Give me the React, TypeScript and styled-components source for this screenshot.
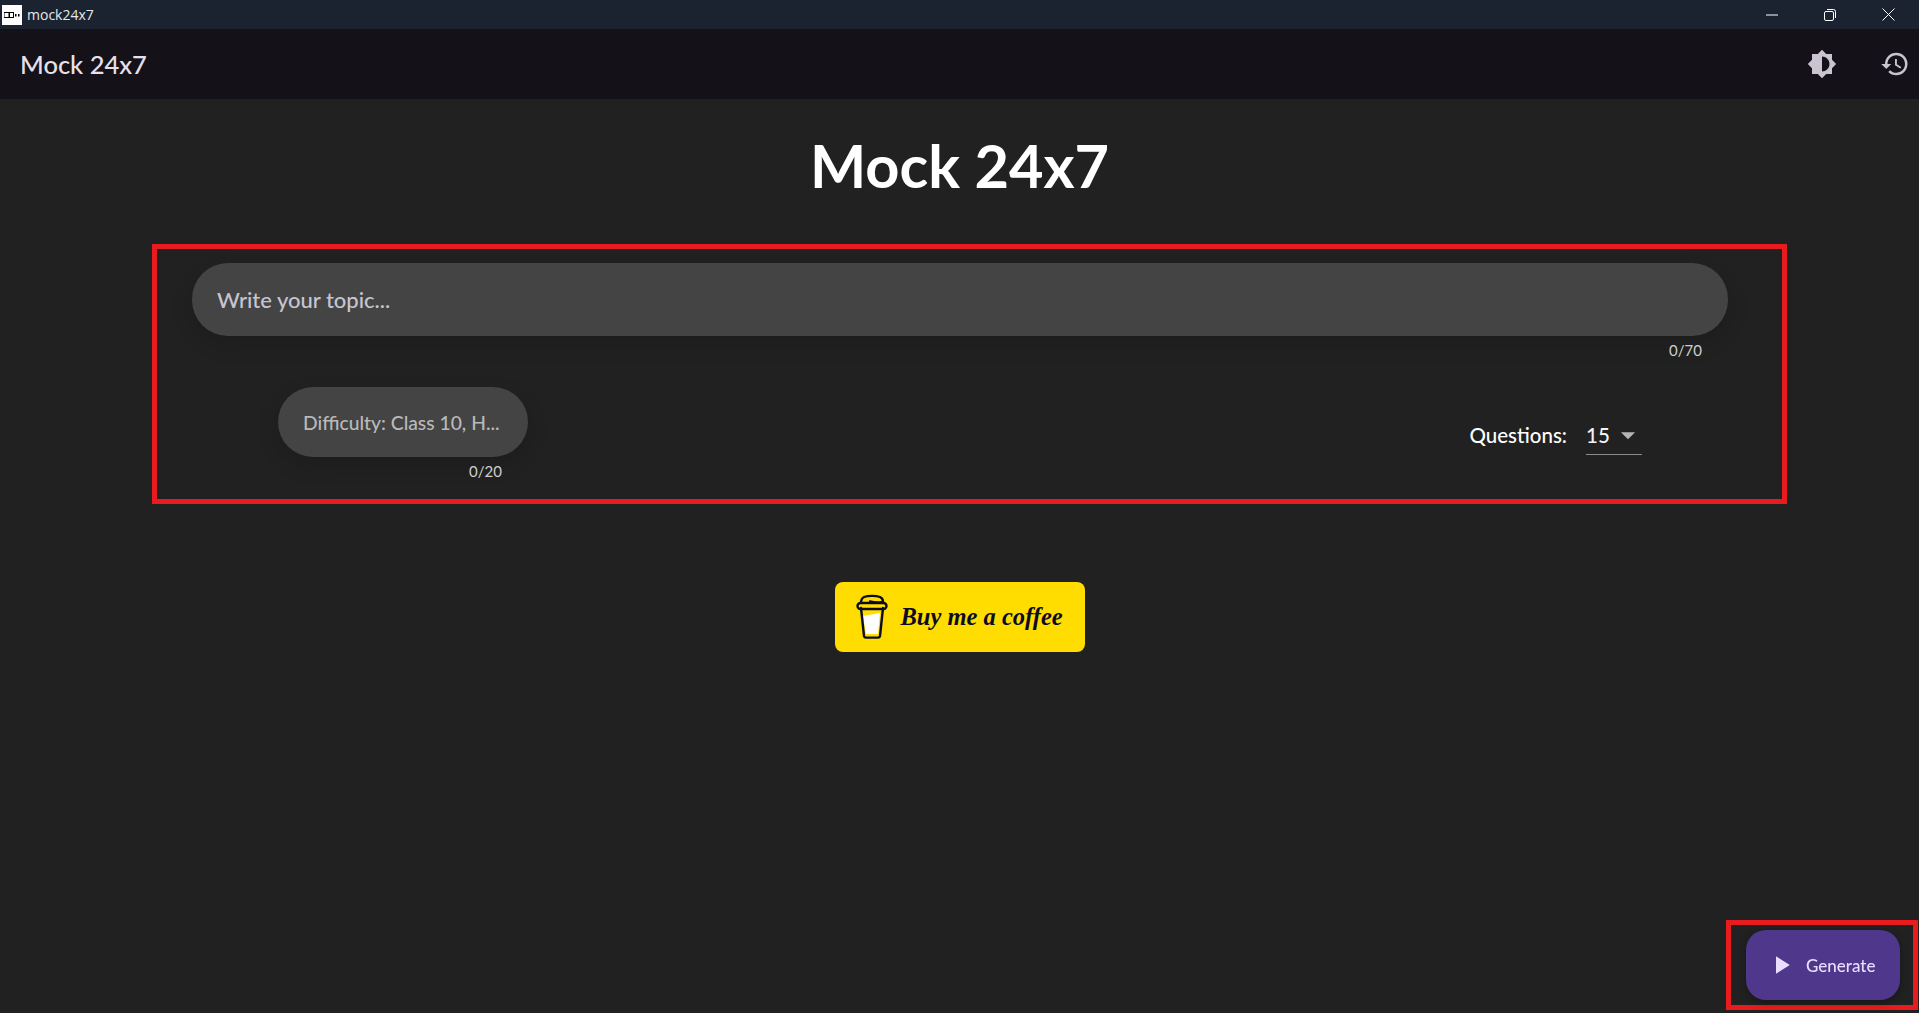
import React from 'react';
import styled, { createGlobalStyle } from 'styled-components';
import { MdHistory, MdPlayArrow, MdArrowDropDown } from 'react-icons/md';

const GlobalStyle = createGlobalStyle`
  html, body {
    margin: 0;
    height: 100%;
    background: #212121;
    overflow: hidden;
  }
  * {
    box-sizing: border-box;
  }
`;

const Page = styled.div`
  height: 1013px;
  display: flex;
  flex-direction: column;
  font-family: Lato, "Noto Sans", sans-serif;
  color: #fff;
`;

const TitleBar = styled.div`
  height: 29px;
  background: #1b2330;
  display: flex;
  align-items: center;
  padding: 0 2px;
`;

const WindowTitle = styled.span`
  margin-left: 5px;
  font-family: "Open Sans", sans-serif;
  font-size: 14px;
  color: #e8e8e8;
  flex: 1;
`;

const AppLogo = styled.div`
  width: 20px;
  height: 20px;
  background: #fff;
  display: flex;
  align-items: center;
  justify-content: center;
`;

const WindowButton = styled.div`
  width: 58px;
  height: 29px;
  display: flex;
  align-items: center;
  justify-content: center;
`;

const AppBar = styled.header`
  height: 70px;
  background: #141218;
  display: flex;
  align-items: center;
  padding: 0 9px 0 20px;
  gap: 43px;
`;

const AppTitle = styled.div`
  font-size: 25.5px;
  font-weight: 500;
  color: #e6e0e9;
  flex: 1;
`;

const BarIcon = styled.div`
  width: 30px;
  height: 30px;
  color: #cac4d0;
  display: flex;
`;

const Main = styled.main`
  flex: 1;
  display: flex;
  flex-direction: column;
`;

const Heading = styled.h1`
  margin: 31px 0 0;
  height: 70px;
  line-height: 70px;
  text-align: center;
  font-size: 59.5px;
  font-weight: 700;
  color: #fff;
`;

const FormBox = styled.section`
  margin: 44px 0 0 152px;
  width: 1635px;
  height: 260px;
  border: 5px solid #e81c1f;
  padding: 14px 54px 0 35px;
  display: flex;
  flex-direction: column;
`;

const Field = styled.div`
  display: flex;
  flex-direction: column;
`;

const Pill = styled.div<{ $tall?: boolean }>`
  height: ${(p) => (p.$tall ? '73px' : '70px')};
  border-radius: 36px;
  background: #444444;
  box-shadow: 0 8px 22px rgba(0, 0, 0, 0.14);
  display: flex;
  align-items: center;
  padding-left: 25px;
  padding-top: ${(p) => (p.$tall ? '0' : '1px')};
  font-size: ${(p) => (p.$tall ? '22px' : '19.3px')};
  font-weight: 500;
  color: ${(p) => (p.$tall ? '#c9c5d0' : '#b9b9b9')};
`;

const Counter = styled.div<{ $right: number }>`
  margin: 5px 0 3px;
  padding-right: ${(p) => p.$right}px;
  text-align: right;
  font-size: 15px;
  line-height: 18px;
  color: #cfcfcf;
`;

const OptionsRow = styled.div`
  margin-top: 25px;
  padding: 0 86px;
  display: flex;
  align-items: center;
  justify-content: space-between;
`;

const DifficultyField = styled(Field)`
  width: 250px;
`;

const QuestionsGroup = styled.div`
  display: flex;
  align-items: center;
  gap: 19px;
  font-size: 20.5px;
  font-weight: 500;
`;

const Select = styled.div`
  width: 56px;
  height: 39px;
  border-bottom: 1.5px solid #8c8c8c;
  display: flex;
  align-items: center;
  justify-content: space-between;
  color: #f2f2f2;
`;

const ArrowSlot = styled.div`
  color: #b5b5b5;
  display: flex;
  margin-right: -3px;
`;

const CoffeeButton = styled.a`
  align-self: center;
  margin-top: 78px;
  width: 250px;
  height: 70px;
  border-radius: 8px;
  background: #ffdd00;
  display: flex;
  align-items: center;
  padding-left: 21px;
  gap: 13px;
  font-family: "Liberation Serif", serif;
  font-style: italic;
  font-weight: 700;
  font-size: 24.5px;
  color: #0d0c22;
  white-space: nowrap;
`;

const FabFrame = styled.div`
  position: fixed;
  right: 1px;
  bottom: 3px;
  width: 192px;
  height: 90px;
  border: 5px solid #e81c1f;
  padding: 5px 13px 5px 15px;
`;

const Fab = styled.button`
  width: 154px;
  height: 70px;
  border: none;
  border-radius: 20px;
  background: #4f378b;
  box-shadow: 0 3px 8px rgba(0, 0, 0, 0.3);
  color: #eaddff;
  display: flex;
  align-items: center;
  padding: 0 0 0 20px;
  gap: 10px;
  font-family: Lato, sans-serif;
  font-size: 17px;
  font-weight: 500;
`;

const BrightnessIcon = () => (
  <svg width="30" height="30" viewBox="0 0 24 24" fill="currentColor">
    <path d="M20 15.31L23.31 12 20 8.69V4h-4.69L12 .69 8.69 4H4v4.69L.69 12 4 15.31V20h4.69L12 23.31 15.31 20H20v-4.69zM12 18V6c3.31 0 6 2.69 6 6s-2.69 6-6 6z" />
  </svg>
);

const CupIcon = () => (
  <svg width="32" height="46" viewBox="0 0 32 46" fill="none" stroke="#0d0c22" strokeWidth="2.4" strokeLinecap="round" strokeLinejoin="round">
    <path d="M7 22l17-3-2 21H10z" fill="#fff" stroke="none" />
    <path d="M5 14l3 28c.2 1 1 1.6 2 1.6h12c1 0 1.800-.6 2-1.600l3-28" />
    <rect x="1.500" y="9" width="29" height="6" rx="3" />
    <path d="M5 9c0-2 1-5 3-6 4-1.500 12-1.500 16 0 2 1 3 3 3 4.500-4 1.500-9 1-13 0" />
  </svg>
);

const LogoMark = () => (
  <svg width="16" height="6" viewBox="0 0 16 6">
    <rect x="0" y="0.500" width="5" height="5" fill="none" stroke="#000" />
    <rect x="5.500" y="0.500" width="4" height="5" fill="none" stroke="#000" />
    <rect x="11" y="2" width="1.500" height="2.500" fill="#000" />
    <rect x="14" y="2" width="1.500" height="2.500" fill="#000" />
  </svg>
);

const App: React.FC = () => {
  return (
    <Page>
      <GlobalStyle />
      <TitleBar>
        <AppLogo>
          <LogoMark />
        </AppLogo>
        <WindowTitle>mock24x7</WindowTitle>
        <WindowButton>
          <svg width="12" height="2" viewBox="0 0 12 2">
            <path d="M0 1h12" stroke="#fff" strokeWidth="1" />
          </svg>
        </WindowButton>
        <WindowButton>
          <svg width="12" height="12" viewBox="0 0 12 12" fill="none" stroke="#fff">
            <rect x="0.500" y="2.500" width="9" height="9" rx="1.500" />
            <path d="M3 .5h6.500a2 2 0 0 1 2 2V9" />
          </svg>
        </WindowButton>
        <WindowButton>
          <svg width="13" height="13" viewBox="0 0 13 13">
            <path d="M.5.5l12 12M12.500.5l-12 12" stroke="#fff" strokeWidth="1" />
          </svg>
        </WindowButton>
      </TitleBar>
      <AppBar>
        <AppTitle>Mock 24x7</AppTitle>
        <BarIcon>
          <BrightnessIcon />
        </BarIcon>
        <BarIcon>
          <MdHistory size={30} />
        </BarIcon>
      </AppBar>
      <Main>
        <Heading>Mock 24x7</Heading>
        <FormBox>
          <Field>
            <Pill $tall>Write your topic...</Pill>
            <Counter $right={26}>0/70</Counter>
          </Field>
          <OptionsRow>
            <DifficultyField>
              <Pill>Difficulty: Class 10, H...</Pill>
              <Counter $right={26}>0/20</Counter>
            </DifficultyField>
            <QuestionsGroup>
              <span>Questions:</span>
              <Select>
                <span>15</span>
                <ArrowSlot>
                  <MdArrowDropDown size={34} />
                </ArrowSlot>
              </Select>
            </QuestionsGroup>
          </OptionsRow>
        </FormBox>
        <CoffeeButton>
          <CupIcon />
          <span>Buy me a coffee</span>
        </CoffeeButton>
      </Main>
      <FabFrame>
        <Fab>
          <MdPlayArrow size={30} />
          <span>Generate</span>
        </Fab>
      </FabFrame>
    </Page>
  );
};

export default App;
